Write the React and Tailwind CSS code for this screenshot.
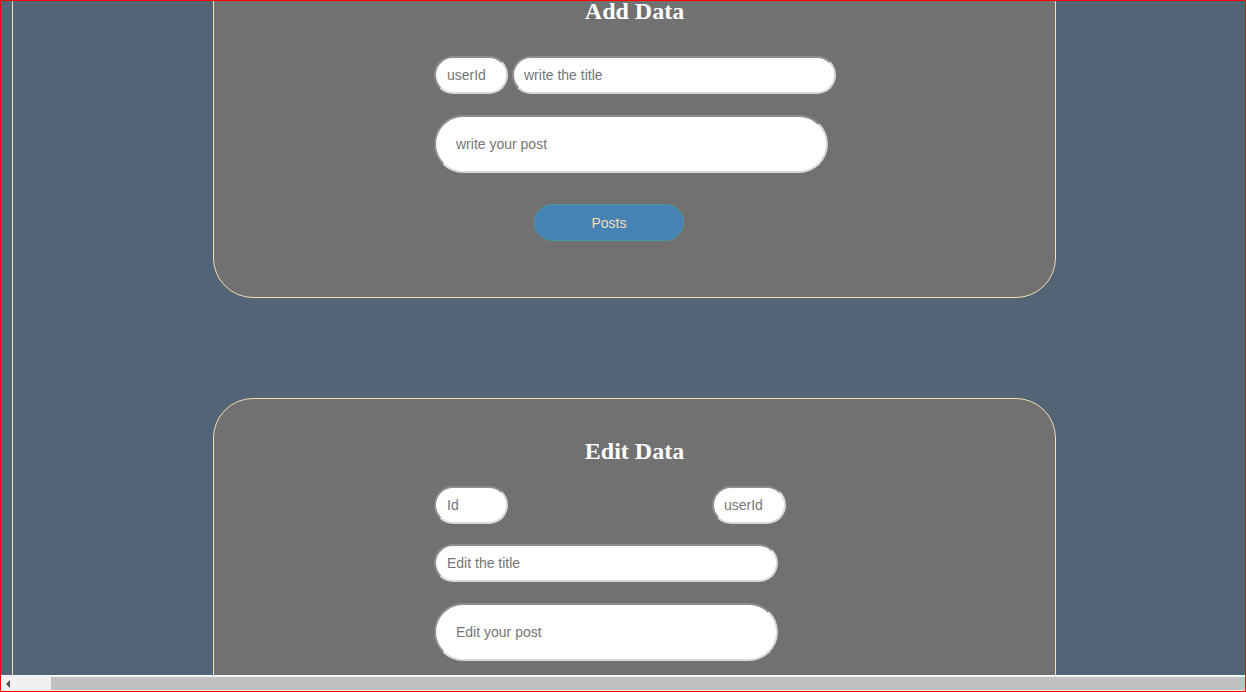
import React from 'react';

const field =
  'h-[38px] rounded-full bg-white border-2 border-t-[#8e8e8e] border-l-[#8e8e8e] border-b-[#d8d8d8] border-r-[#d8d8d8] text-sm text-[#555] placeholder:text-[#757575] outline-none';

function Heading({ children }) {
  return (
    <h2 className="text-center text-white text-[24px] font-bold leading-[28px] font-['Liberation_Serif',serif]">
      {children}
    </h2>
  );
}

function AddCard() {
  return (
    <div className="-mt-[43px] w-[843px] h-[340px] shrink-0 rounded-[40px] border border-[#f5deb3] bg-[#707170] pt-[38px]">
      <Heading>Add Data</Heading>
      <div className="ml-[220px] mt-[31px] flex flex-col items-start">
        <div className="flex gap-[4px]">
          <input className={`${field} w-[74px] pl-[11px]`} placeholder="userId" />
          <input className={`${field} w-[324px] pl-[10px]`} placeholder="write the title" />
        </div>
        <input className={`${field} mt-[21px] h-[58px] w-[394px] pl-[20px]`} placeholder="write your post" />
        <button className="ml-[100px] mt-[31px] h-[37px] w-[150px] rounded-full border border-[#4a9aa0] bg-[#4682b4] text-sm text-[#f5deb3]">
          Posts
        </button>
      </div>
    </div>
  );
}

function EditCard() {
  return (
    <div className="mt-[100px] w-[843px] h-[400px] shrink-0 rounded-[40px] border border-[#f5deb3] bg-[#707170] pt-[38px]">
      <Heading>Edit Data</Heading>
      <div className="ml-[220px] mt-[21px] flex flex-col items-start">
        <div className="flex w-[352px] justify-between">
          <input className={`${field} w-[74px] pl-[11px]`} placeholder="Id" />
          <input className={`${field} w-[74px] pl-[10px]`} placeholder="userId" />
        </div>
        <input className={`${field} mt-[20px] w-[344px] pl-[11px]`} placeholder="Edit the title" />
        <input className={`${field} mt-[21px] h-[58px] w-[344px] pl-[20px]`} placeholder="Edit your post" />
      </div>
    </div>
  );
}

export default function App() {
  return (
    <div className="w-[1246px] h-[692px] flex flex-col overflow-hidden border border-[#ff0000] bg-[#526475] font-['Liberation_Sans',Arial,sans-serif]">
      <div className="flex-1 overflow-hidden pl-[11px]">
        <div className="h-full border-l border-[#f5deb3] pl-[200px] flex flex-col">
          <AddCard />
          <EditCard />
        </div>
      </div>
      <div className="h-[16px] shrink-0 border-t border-[#fafafa] bg-[#f0f0f0] flex items-center">
        <div className="w-[50px] flex items-center pl-[5px]">
          <svg width="5" height="8" viewBox="0 0 5 8">
            <path d="M4 0 L0 4 L4 8 Z" fill="#505050" />
          </svg>
        </div>
        <div className="flex-1 h-[13px] bg-[#c0c0c0]" />
      </div>
    </div>
  );
}
